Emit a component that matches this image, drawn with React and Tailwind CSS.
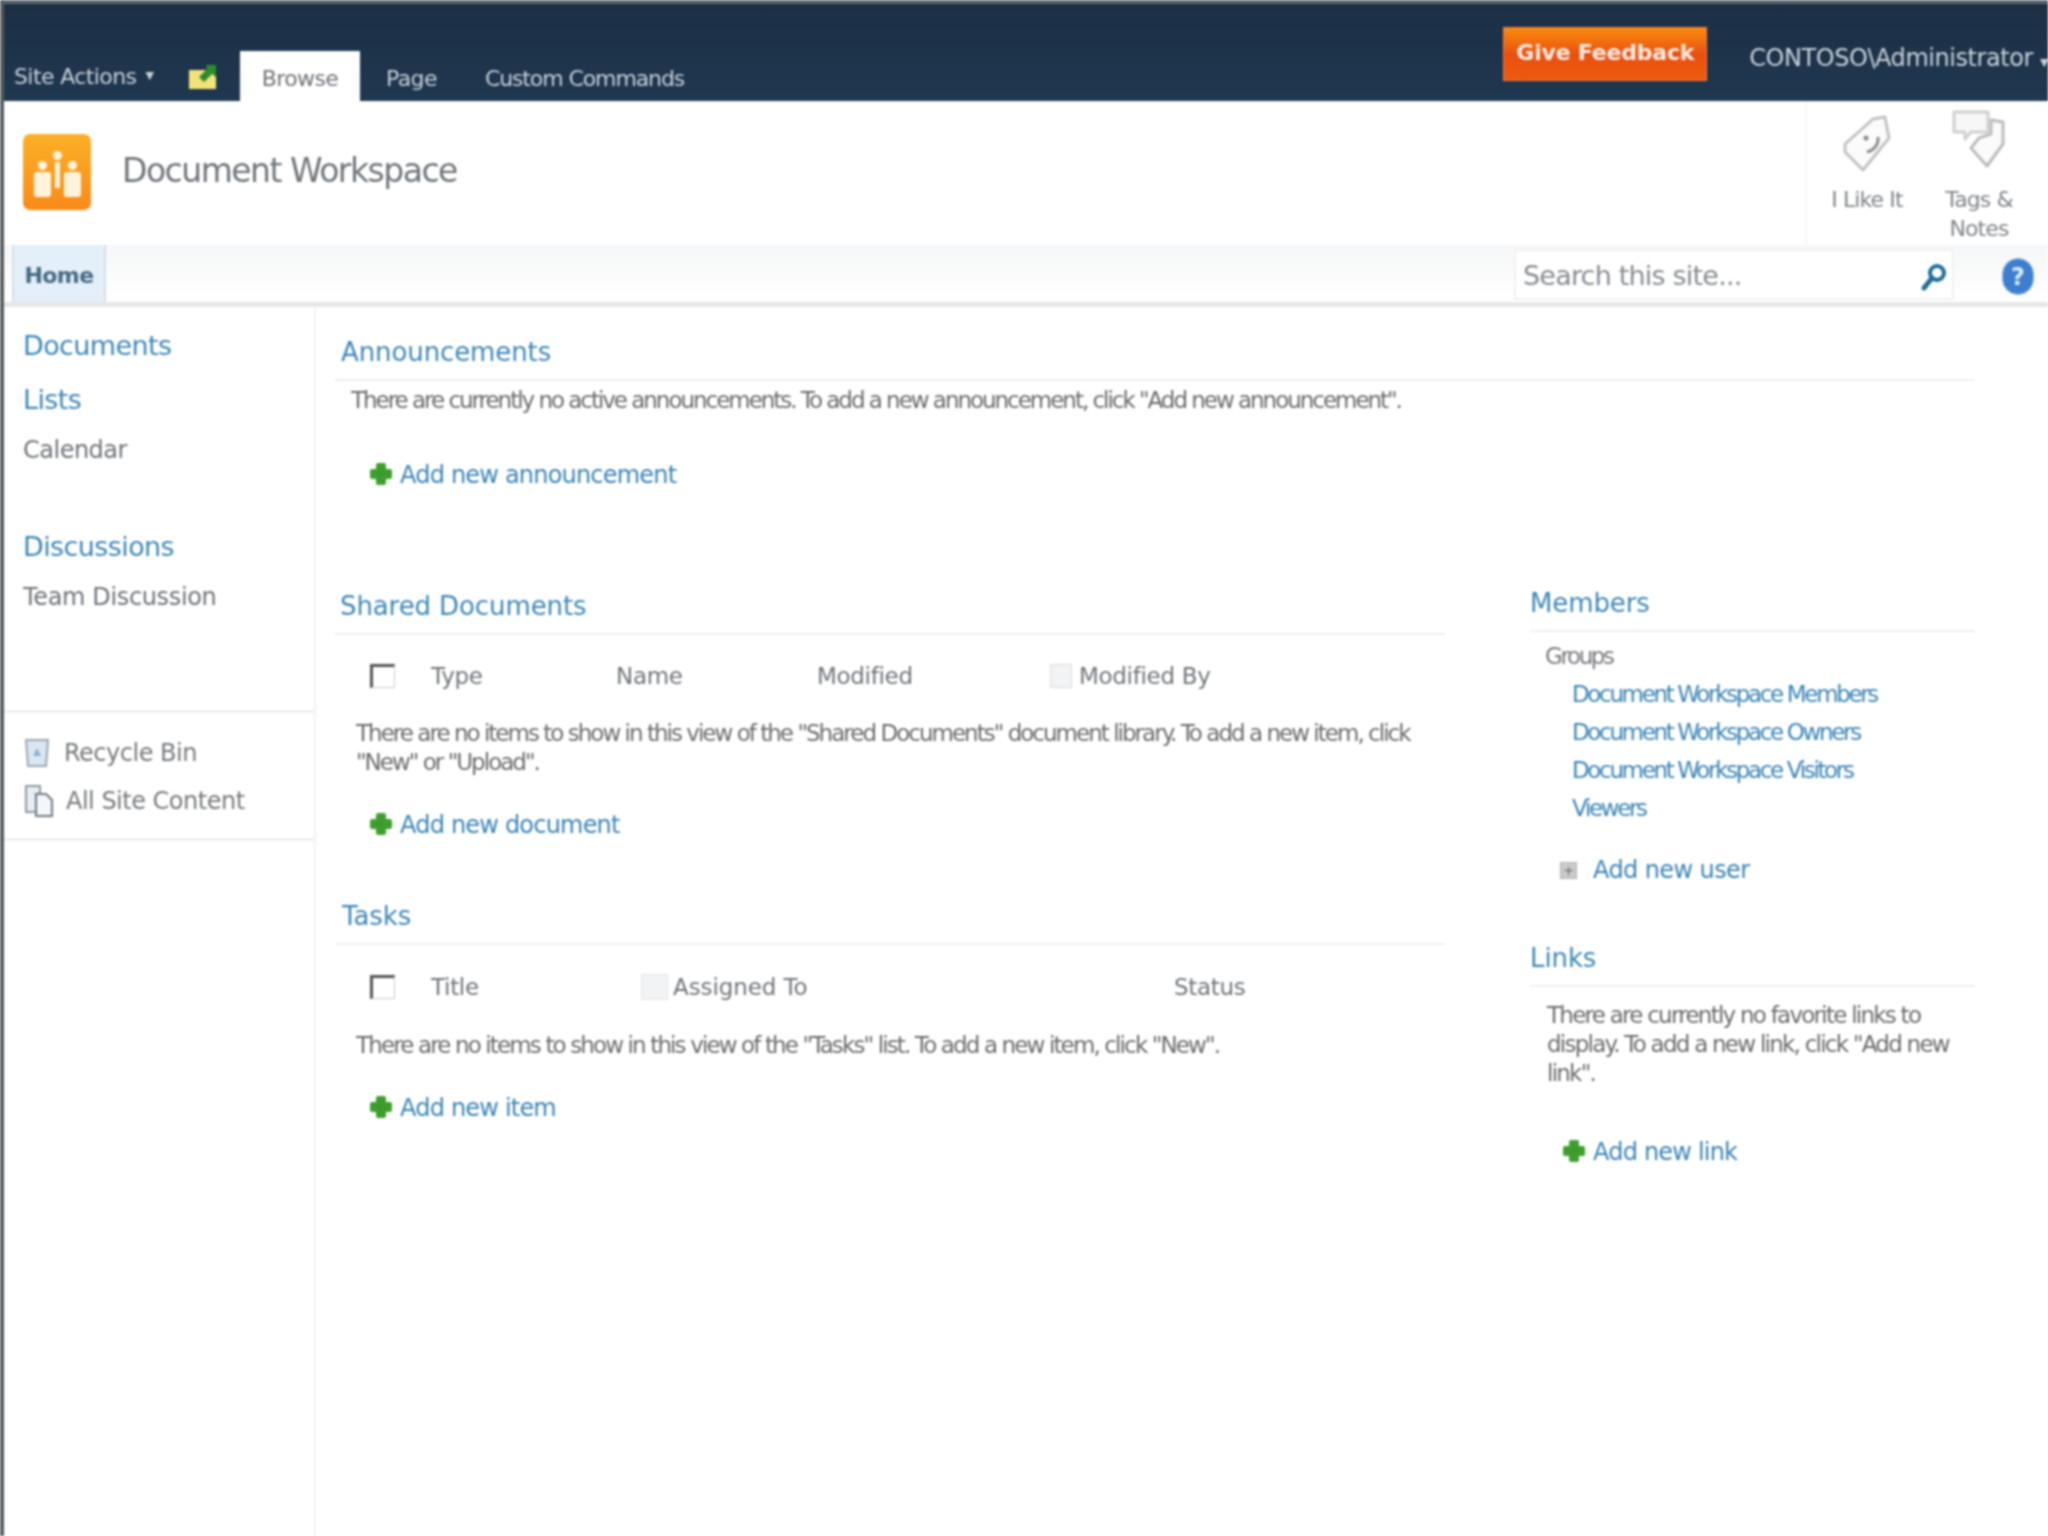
const font = { fontFamily: '"DejaVu Sans", sans-serif' };

function PlusIcon() {
  return (
    <svg width="24" height="26" viewBox="0 0 24 26" className="shrink-0 mt-[-3px]">
      <path d="M9 4h6v6h6v6h-6v6H9v-6H3v-6h6z" fill="#3a9a2a" stroke="#3f9f2e" strokeWidth="4" strokeLinejoin="round" />
    </svg>
  );
}

function Checkbox() {
  return <div className="w-[25px] h-[24px] border-l-[3px] border-t-[3px] border-r border-b border-l-[#555] border-t-[#555] border-r-[#ccc] border-b-[#ccc] bg-white shrink-0" />;
}

function SectionTitle({ children, className }) {
  return <div className={"text-[26px] leading-[34px] text-[#3d87b8] tracking-[-0.1px] border-b-2 border-[#f0f0f0] pb-[10px] " + className}>{children}</div>;
}

function AddLink({ children, className }) {
  return (
    <div className={"flex items-center gap-[7px] text-[24px] leading-[30px] tracking-[-0.8px] text-[#3a84b6] " + className}>
      <PlusIcon />
      <span>{children}</span>
    </div>
  );
}

function SmallNote({ children, className }) {
  return <p className={"text-[23px] leading-[29px] text-[#6c6c6c] " + className}>{children}</p>;
}

function TagIcon() {
  return (
    <svg width="52" height="60" viewBox="0 0 52 60">
      <path d="M44 3 48 24 22 56 4 38 4 30 32 5z" fill="#fbfbfb" stroke="#c3c3c3" strokeWidth="3" strokeLinejoin="round" />
      <circle cx="25" cy="24" r="2.5" fill="#8a8a8a" />
      <path d="M37 23c1 8-5 14-11 15" fill="none" stroke="#8a8a8a" strokeWidth="3" />
    </svg>
  );
}

function NotesIcon() {
  return (
    <svg width="56" height="62" viewBox="0 0 56 62">
      <path d="M3 4h34v20H20l-6 7v-7H3z" fill="#f7f7f7" stroke="#d0d0d0" strokeWidth="3" strokeLinejoin="round" />
      <path d="M40 12l12 2v22L36 58 20 40l8-10 12-4z" fill="#fbfbfb" stroke="#bdbdbd" strokeWidth="3" strokeLinejoin="round" />
    </svg>
  );
}

function Logo() {
  return (
    <div className="w-[68px] h-[76px] rounded-[7px] bg-gradient-to-b from-[#fbb028] to-[#f98a1a] flex items-end justify-center gap-[2px] pb-[13px]">
      <div className="flex flex-col items-center gap-[2px]">
        <div className="w-[9px] h-[9px] rounded-full bg-[#fff3dc]" />
        <div className="w-[17px] h-[25px] rounded-[3px] bg-[#fff3dc]" />
      </div>
      <div className="flex flex-col items-center gap-[2px] mb-[9px]">
        <div className="w-[9px] h-[9px] rounded-full bg-[#fff3dc]" />
        <div className="w-[5px] h-[26px] bg-[#fff3dc]" />
      </div>
      <div className="flex flex-col items-center gap-[2px]">
        <div className="w-[9px] h-[9px] rounded-full bg-[#fff3dc]" />
        <div className="w-[17px] h-[25px] rounded-[3px] bg-[#fff3dc]" />
      </div>
    </div>
  );
}

export default function App() {
  return (
    <div style={font} className="min-h-screen bg-white border-l-4 border-[#555b60] overflow-hidden blur-[0.8px] flex flex-col">
      {/* top bar */}
      <div className="h-[101px] bg-gradient-to-b from-[#1c2f45] to-[#1f3850] border-t-4 border-[#5b6670] flex items-end relative shrink-0">
        <div className="flex items-center h-[50px] pl-[10px] w-[236px] text-[22px] tracking-[-0.6px] text-[#c9d0d8]">
          <span>Site Actions</span>
          <span className="ml-[9px] text-[11px]">▼</span>
          <svg width="30" height="26" viewBox="0 0 30 26" className="ml-[35px] mt-[2px]">
            <path d="M1 6h27v19H1z" fill="#f3e27a" />
            <path d="M18 1l10 0v12l-4-3-8 8-5-5 8-8z" fill="#2f8a2a" />
          </svg>
        </div>
        <div className="w-[120px] h-[50px] pt-[4px] bg-white flex items-center justify-center text-[22px] tracking-[-0.6px] text-[#6f7378]">Browse</div>
        <div className="flex items-center h-[50px] pt-[4px] pl-[26px] gap-[48px] text-[22px] tracking-[-0.6px] text-[#c9d0d8]">
          <span>Page</span>
          <span className="tracking-[-1.1px]">Custom Commands</span>
        </div>
        <div className="ml-auto flex items-center self-start mt-[22px] h-[56px]">
          <div className="w-[204px] h-[54px] pb-[4px] bg-gradient-to-b from-[#f98a0e] via-[#e9500f] to-[#ee5a10] border border-[#f6783c] flex items-center justify-center text-[22px] font-bold tracking-[-0.2px] text-[#fbeee6]">Give Feedback</div>
          <span className="ml-[42px] pt-[8px] text-[24px] tracking-[-0.45px] text-[#c9d3dc] whitespace-nowrap">CONTOSO\Administrator <span className="text-[11px]">▼</span></span>
        </div>
      </div>

      {/* title row */}
      <div className="h-[144px] flex items-center shrink-0 relative">
        <div className="ml-[19px] mt-[-2px]"><Logo /></div>
        <div className="ml-[31px] mt-[-4px] text-[33px] tracking-[-1.5px] text-[#70757a]">Document Workspace</div>
        <div className="ml-auto self-stretch w-[243px] border-l-2 border-[#f6f6f6] flex text-[22px] leading-[29px] tracking-[-0.9px] text-[#80858a]">
          <div className="w-[120px] flex flex-col items-center pt-[13px]">
            <TagIcon />
            <div className="mt-[11px]">I Like It</div>
          </div>
          <div className="w-[100px] flex flex-col items-center text-center pt-[7px] pl-[4px]">
            <NotesIcon />
            <div className="mt-[15px] leading-[29px]">Tags &amp;<br />Notes</div>
          </div>
        </div>
      </div>

      {/* nav row */}
      <div className="h-[62px] flex items-stretch border-b-[5px] border-[#e6e7e8] bg-gradient-to-b from-[#f6f7f8] to-white shrink-0">
        <div className="ml-[8px] w-[94px] pt-[4px] bg-[#e3eff9] border-l-2 border-r-2 border-[#d6e0e8] flex items-center justify-center text-[22px] font-semibold tracking-[-0.6px] text-[#456a80]">Home</div>
        <div className="ml-auto w-[440px] mt-[4px] mb-[2px] bg-white border-2 border-[#f1f1f1] flex items-center pl-[7px] pt-[4px] text-[27px] tracking-[-0.8px] text-[#868b90] mr-[94px]">
          <span className="whitespace-nowrap">Search this site...</span>
          <svg width="28" height="30" viewBox="0 0 28 30" className="ml-auto mr-[4px] shrink-0">
            <circle cx="17" cy="11" r="7" fill="#fff" stroke="#1f6d96" strokeWidth="4" />
            <path d="M12 16 4 26" stroke="#1f6d96" strokeWidth="5" strokeLinecap="round" />
          </svg>
        </div>
        <div className="absolute right-[14px] mt-[13px] w-[32px] h-[37px] rounded-full bg-[#3d7fce] border border-[#9cc0e8] flex items-center justify-center text-[24px] font-bold text-[#dbe9fb]">?</div>
      </div>

      {/* body */}
      <div className="flex flex-1">
        <div className="w-[312px] border-r-2 border-[#f3f3f3] shrink-0">
          <div className="pl-[19px] pt-[21px] h-[406px] border-b-[3px] border-[#f0f0f0]">
            <div className="text-[27px] leading-[36px] tracking-[-0.6px] text-[#3d87b8]">Documents</div>
            <div className="mt-[18px] text-[27px] leading-[36px] tracking-[-0.6px] text-[#3d87b8]">Lists</div>
            <div className="mt-[14px] text-[24px] leading-[36px] tracking-[-0.5px] text-[#6f7378]">Calendar</div>
            <div className="mt-[61px] text-[27px] leading-[36px] tracking-[-0.6px] text-[#3d87b8]">Discussions</div>
            <div className="mt-[14px] text-[24px] leading-[36px] tracking-[-0.35px] text-[#6f7378]">Team Discussion</div>
          </div>
          <div className="pl-[20px] pt-[22px] h-[128px] border-b-[3px] border-[#f0f0f0] text-[24px] leading-[36px] tracking-[-0.5px] text-[#767a7e]">
            <div className="flex items-center gap-[14px]">
              <svg width="26" height="30" viewBox="0 0 26 30">
                <path d="M2 2h22l-2 26H4z" fill="#dbe6f2" stroke="#9aa8b6" strokeWidth="2" />
                <path d="M9 18l4-8 4 8z" fill="#8eb0d4" />
              </svg>
              <span>Recycle Bin</span>
            </div>
            <div className="flex items-center gap-[12px] mt-[12px]">
              <svg width="30" height="34" viewBox="0 0 30 34">
                <path d="M2 2h14v26H2z" fill="#e6edf4" stroke="#8e98a2" strokeWidth="2" />
                <path d="M12 10h10l6 6v16H12z" fill="#f3f6fa" stroke="#6e7a86" strokeWidth="2" />
              </svg>
              <span>All Site Content</span>
            </div>
          </div>
        </div>

        <div className="flex-1 pl-[19px] pt-[28px] flex items-start">
          <div className="w-[1640px] shrink-0">
            {/* announcements */}
            <SectionTitle className="pl-[6px]">Announcements</SectionTitle>
            <SmallNote className="ml-[16px] mt-[5px] tracking-[-2.03px]">There are currently no active announcements. To add a new announcement, click "Add new announcement".</SmallNote>
            <AddLink className="ml-[34px] mt-[45px]">Add new announcement</AddLink>

            <div className="flex mt-[99px]">
              <div className="w-[1110px] shrink-0">
                <SectionTitle className="pl-[5px]">Shared Documents</SectionTitle>
                <div className="flex items-center ml-[35px] mt-[26px] text-[23px] leading-[30px] tracking-[-0.3px] text-[#70757a]">
                  <Checkbox />
                  <span className="ml-[36px] w-[185px]">Type</span>
                  <span className="w-[201px]">Name</span>
                  <span className="w-[233px]">Modified</span>
                  <div className="w-[22px] h-[24px] bg-[#f1f3f4] border border-[#dcdcdc] mr-[7px]" />
                  <span>Modified By</span>
                </div>
                <SmallNote className="ml-[21px] mt-[28px] w-[1080px] tracking-[-1.98px]">There are no items to show in this view of the "Shared Documents" document library. To add a new item, click "New" or "Upload".</SmallNote>
                <AddLink className="ml-[34px] mt-[33px]">Add new document</AddLink>

                <SectionTitle className="pl-[7px] mt-[59px]">Tasks</SectionTitle>
                <div className="flex items-center ml-[35px] mt-[27px] text-[23px] leading-[30px] tracking-[-0.3px] text-[#70757a]">
                  <Checkbox />
                  <span className="ml-[36px] w-[210px]">Title</span>
                  <div className="w-[27px] h-[26px] bg-[#f1f3f4] border border-[#e6e6e6] mr-[5px]" />
                  <span className="w-[501px] tracking-[-0.1px]">Assigned To</span>
                  <span>Status</span>
                </div>
                <SmallNote className="ml-[21px] mt-[29px] tracking-[-1.87px]">There are no items to show in this view of the "Tasks" list. To add a new item, click "New".</SmallNote>
                <AddLink className="ml-[34px] mt-[33px]">Add new item</AddLink>
              </div>

              <div className="ml-[85px] flex-1 mt-[-3px]">
                <SectionTitle>Members</SectionTitle>
                <div className="ml-[15px] mt-[10px] text-[23px] leading-[29px] tracking-[-2.4px] text-[#767a7e]">Groups</div>
                <div className="ml-[42px] mt-[4px] text-[23px] leading-[38px] tracking-[-2.35px] text-[#3a84b6]">
                  <div>Document Workspace Members</div>
                  <div>Document Workspace Owners</div>
                  <div>Document Workspace Visitors</div>
                  <div>Viewers</div>
                </div>
                <div className="flex items-center ml-[30px] mt-[28px] text-[24px] leading-[30px] tracking-[-0.6px] text-[#3a84b6]">
                  <div className="w-[17px] h-[17px] bg-[#c9c9c9] border border-[#b5b5b5] flex items-center justify-center text-[13px] leading-none text-[#666]">+</div>
                  <span className="ml-[16px]">Add new user</span>
                </div>
                <SectionTitle className="mt-[56px]">Links</SectionTitle>
                <SmallNote className="ml-[17px] mt-[14px] w-[420px] tracking-[-1.75px]">There are currently no favorite links to display. To add a new link, click "Add new link".</SmallNote>
                <AddLink className="ml-[32px] mt-[49px]">Add new link</AddLink>
              </div>
            </div>
          </div>
        </div>
      </div>
    </div>
  );
}
